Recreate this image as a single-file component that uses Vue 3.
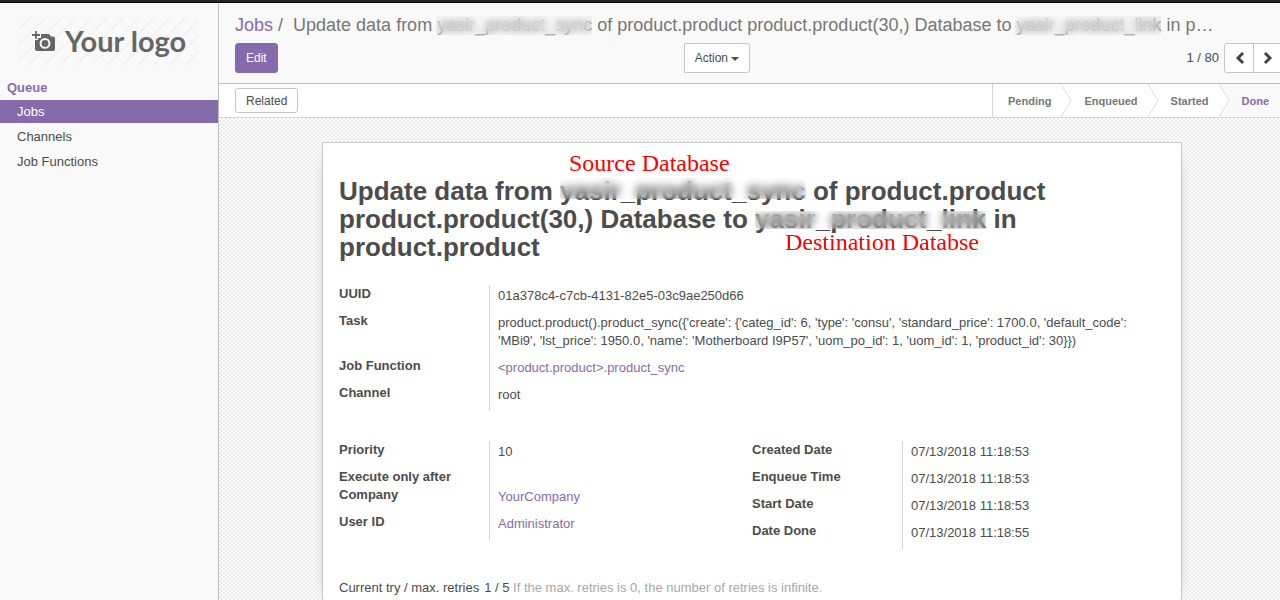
<script setup>
const menu = ['Jobs', 'Channels', 'Job Functions']
const stages = ['Pending', 'Enqueued', 'Started', 'Done']
const task =
  "product.product().product_sync({'create': {'categ_id': 6, 'type': 'consu', 'standard_price': 1700.0, 'default_code': 'MBi9', 'lst_price': 1950.0, 'name': 'Motherboard I9P57', 'uom_po_id': 1, 'uom_id': 1, 'product_id': 30}})"
const summary = [
  { label: 'UUID', value: '01a378c4-c7cb-4131-82e5-03c9ae250d66' },
  { label: 'Task', value: task },
  { label: 'Job Function', value: '<product.product>.product_sync', link: true },
  { label: 'Channel', value: 'root' },
]
const groups = [
  [
    { label: 'Priority', value: '10' },
    { label: 'Execute only after', value: '', empty: true },
    { label: 'Company', value: 'YourCompany', link: true },
    { label: 'User ID', value: 'Administrator', link: true },
  ],
  [
    { label: 'Created Date', value: '07/13/2018 11:18:53' },
    { label: 'Enqueue Time', value: '07/13/2018 11:18:53' },
    { label: 'Start Date', value: '07/13/2018 11:18:53' },
    { label: 'Date Done', value: '07/13/2018 11:18:55' },
  ],
]
</script>

<template>
  <div class="app">
    <div class="topbar"></div>
    <div class="body">
      <aside class="sidebar">
        <a class="logo" href="#" aria-label="Your logo">
          <svg class="camera" viewBox="0 0 23 21" aria-hidden="true">
            <path fill="#666" fill-rule="evenodd" d="M9 3h8l2 2.500h2q2 0 2 2v10.500q0 2-2 2H5q-2 0-2-2V9h3V7h3zM13 7a5.400 5.400 0 1 0 0 10.800 5.400 5.400 0 0 0 0-10.800z" />
            <circle cx="13" cy="12.400" r="3.400" fill="#666" />
            <path stroke="#666" stroke-width="1.800" d="M4 0v8M0 4h8" />
          </svg>
          <span>Your logo</span>
        </a>
        <nav>
          <h2>Queue</h2>
          <ul>
            <li v-for="(item, i) in menu" :key="item">
              <a href="#" :class="{ active: i === 0 }">{{ item }}</a>
            </li>
          </ul>
        </nav>
      </aside>

      <main class="main">
        <header class="panel">
          <div class="crumbs">
            <a href="#">Jobs</a><span class="slash">/</span>
            <span>Update data from <span class="masked">yasir_product_sync</span> of product.product product.product(30,) Database to <span class="masked">yasir_product_link</span> in p…</span>
          </div>
          <div class="tools">
            <div class="tools-left">
              <button class="btn primary">Edit</button>
              <button class="btn action">Action<i class="caret"></i></button>
            </div>
            <div class="pager">
              <span>1 / 80</span>
              <button aria-label="Previous"><svg viewBox="0 0 10 12"><path d="M8 2 4 6l4 4" /></svg></button>
              <button aria-label="Next"><svg viewBox="0 0 10 12"><path d="m3 2 4 4-4 4" /></svg></button>
            </div>
          </div>
        </header>

        <div class="statusbar">
          <button class="btn related">Related</button>
          <div class="stages">
            <template v-for="(stage, i) in stages" :key="stage">
              <svg v-if="i" class="chevron" viewBox="0 0 11 33" aria-hidden="true">
                <path v-if="i === 3" d="M0 0H11V33H0L10 16.500z" fill="#f9f9f9" />
                <path d="M0 0 10 16.500 0 33" fill="none" stroke="#dcdcdc" />
              </svg>
              <button :class="{ current: i === 3 }">{{ stage }}</button>
            </template>
          </div>
        </div>

        <div class="canvas">
          <article class="sheet">
            <h1>Update data from <span class="masked">yasir_product_sync</span> of product.product product.product(30,) Database to <span class="masked low">yasir_product_link</span> in product.product</h1>
            <span class="note source">Source Database</span>
            <span class="note destination">Destination Databse</span>

            <dl class="fields">
              <div v-for="f in summary" :key="f.label" class="field">
                <dt>{{ f.label }}</dt>
                <dd><a v-if="f.link" href="#">{{ f.value }}</a><template v-else>{{ f.value }}</template></dd>
              </div>
            </dl>
            <div class="columns">
              <dl v-for="(g, i) in groups" :key="i" class="fields">
                <div v-for="f in g" :key="f.label" class="field" :class="{ empty: f.empty }">
                  <dt>{{ f.label }}</dt>
                  <dd><a v-if="f.link" href="#">{{ f.value }}</a><template v-else>{{ f.value }}</template></dd>
                </div>
              </dl>
            </div>
            <p class="retries"><span class="try">Current try / max. retries</span><span>1 / 5</span> <span class="hint">If the max. retries is 0, the number of retries is infinite.</span></p>
          </article>
        </div>
      </main>
    </div>
  </div>
</template>

<style>
html,
body {
  margin: 0;
  overflow: hidden;
}
</style>

<style scoped>
* {
  box-sizing: border-box;
}
.app {
  display: flex;
  flex-direction: column;
  height: 100vh;
  overflow: hidden;
  font: 13px/18px "Liberation Sans", Arial, sans-serif;
  color: #4c4c4c;
}
a {
  color: #876bb0;
  text-decoration: none;
}
button {
  font: inherit;
  color: inherit;
  cursor: pointer;
}
.topbar {
  flex: none;
  height: 3px;
  background: #252225;
  border-bottom: 1px solid #080808;
}
.body {
  display: flex;
  flex: 1;
  min-height: 0;
}
.sidebar {
  flex: none;
  width: 219px;
  background: #f9f9f9;
  border-right: 1px solid #bfbfbf;
}
.logo {
  display: flex;
  align-items: center;
  gap: 10px;
  height: 48px;
  margin: 14px 19px 14px;
  padding-left: 13px;
  color: #666;
  font: 700 29px/48px Lato, sans-serif;
  white-space: nowrap;
  background: repeating-linear-gradient(-45deg, #f9f9f9 0 9px, #f3f3f3 9px 11px);
}
.camera {
  flex: none;
  width: 23px;
  height: 21px;
}
h2 {
  margin: 0 0 3px;
  padding-left: 7px;
  font-size: 13px;
  line-height: 18px;
  color: #876bb0;
}
ul {
  list-style: none;
  margin: 0;
  padding: 0;
}
li a {
  display: block;
  margin-bottom: 2px;
  padding-left: 17px;
  line-height: 23px;
  color: #4c4c4c;
}
li a.active {
  background: #856aac;
  color: #fff;
}
.main {
  display: flex;
  flex-direction: column;
  flex: 1;
  min-width: 0;
  margin-right: -5px;
}
.panel {
  flex: none;
  height: 81px;
  padding: 10px 2px 0 16px;
  background: #f9f9f9;
  border-bottom: 1px solid #bfbfbf;
}
.crumbs {
  height: 30px;
  font-size: 18px;
  line-height: 24px;
  color: #777;
  white-space: nowrap;
}
.slash {
  padding: 0 10px 0 5px;
}
.slash + span {
  margin-left: 0;
}
.masked {
  position: relative;
}
.masked::after {
  content: "";
  position: absolute;
  inset: 1px 0 0 -1px;
  backdrop-filter: blur(4px);
}
.tools,
.pager {
  display: flex;
  align-items: center;
  justify-content: space-between;
}
.tools-left {
  display: flex;
  justify-content: space-between;
  width: calc(50% - 9px);
}
.btn {
  height: 30px;
  padding: 0 10px;
  font-size: 12px;
  background: #fff;
  border: 1px solid #c6c6c6;
  border-radius: 3px;
}
.primary {
  background: #856aac;
  border-color: #856aac;
  color: #fff;
}
.action {
  border-radius: 0 3px 3px 0;
}
.caret {
  display: inline-block;
  margin-left: 3px;
  vertical-align: middle;
  border: 4px solid transparent;
  border-top-color: currentColor;
  border-bottom: 0;
}
.pager span {
  margin-right: 5px;
}
.pager button {
  width: 30px;
  height: 30px;
  padding: 0;
  background: #fff;
  border: 1px solid #c6c6c6;
  border-radius: 3px 0 0 3px;
}
.pager button + button {
  margin-left: -1px;
  border-radius: 0 3px 3px 0;
}
.pager svg {
  display: block;
  width: 10px;
  height: 12px;
  margin: auto;
  fill: none;
  stroke: #444;
  stroke-width: 3;
  overflow: visible;
  stroke-linecap: square;
}
.statusbar {
  display: flex;
  flex: none;
  align-items: center;
  justify-content: space-between;
  height: 34px;
  padding-left: 16px;
  background: #fff;
  border-bottom: 1px solid #d5d5d5;
}
.related {
  height: 25px;
}
.stages {
  display: flex;
  height: 33px;
  border-left: 1px solid #d5d5d5;
}
.stages button {
  padding: 0 10px 0 12px;
  border: 0;
  background: #fff;
  font-size: 11px;
  font-weight: 700;
  color: #777;
}
.stages button:first-child {
  padding-left: 15px;
}
.stages button.current {
  padding-right: 16px;
  background: #f9f9f9;
  color: #876bb0;
}
.chevron {
  display: block;
  width: 11px;
  height: 33px;
}
.canvas {
  display: flex;
  flex: 1;
  min-height: 0;
  padding: 24px 103px 0;
  background: repeating-conic-gradient(#ebebeb 0 25%, #fff 0 50%) 0 0 / 4px 4px;
}
.sheet {
  position: relative;
  flex: 1;
  min-width: 0;
  padding: 34px 16px 0;
  background: #fff;
  border: 1px solid #c8c8d3;
  border-bottom: 0;
  box-shadow: 0 5px 20px -15px #000;
}
h1 {
  margin: 0 0 24px;
  font-size: 26px;
  line-height: 28px;
}
h1 .masked::after {
  inset: 2px 0 7px;
}
h1 .masked.low::after {
  inset: 7px 0 5px;
}
.note {
  position: absolute;
  font: 24px/28px "Liberation Serif", "Times New Roman", serif;
  color: #f00;
}
.source {
  left: 246px;
  top: 6px;
}
.destination {
  left: 462px;
  top: 85px;
}
.fields {
  margin: 0 0 30px;
}
.columns {
  display: grid;
  grid-template-columns: 1fr 1fr;
}
.field {
  display: grid;
  grid-template-columns: 150px 1fr;
  min-height: 27px;
}
.field.empty {
  min-height: 18px;
}
dt {
  font-weight: 700;
}
dd {
  margin: 0;
  padding: 2px 8px 7px;
  border-left: 1px solid #d5d5d5;
}
.empty dd {
  padding: 0;
}
.retries {
  margin: 0;
}
.try {
  margin-right: 5px;
}
.hint {
  color: #a8a8a8;
}
</style>
